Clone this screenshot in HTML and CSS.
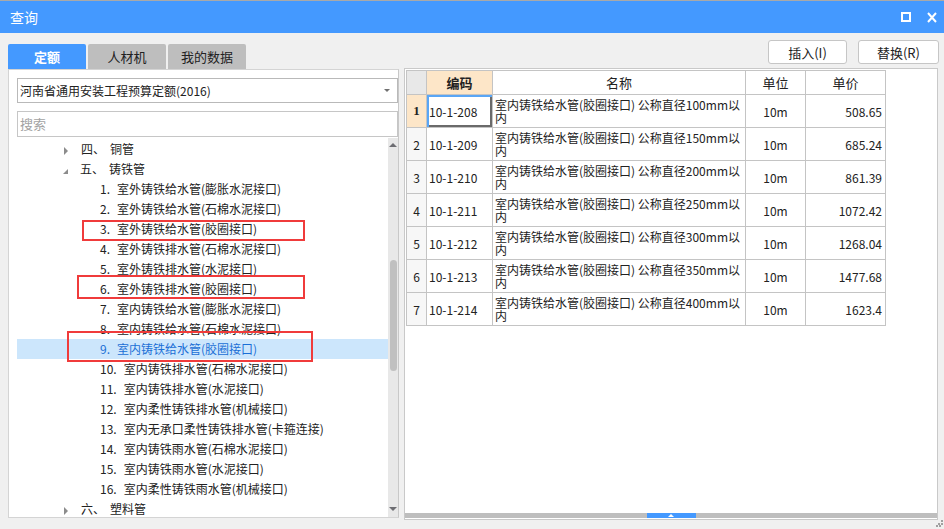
FILE: index.html
```html
<!DOCTYPE html>
<html lang="zh-CN">
<head>
<meta charset="utf-8">
<title>查询</title>
<link rel="stylesheet" href="styles.css">
</head>
<body>
<div class="window">
  <header class="titlebar">
    <span class="title">查询</span>
    <div class="win-btns">
      <svg class="ico" width="10" height="10" viewBox="0 0 10 10"><rect x="1" y="1" width="8" height="8" fill="none" stroke="#fff" stroke-width="2"/></svg>
      <svg class="ico" width="10" height="11" viewBox="0 0 10 11"><path d="M1 1 L9 10 M9 1 L1 10" stroke="#fff" stroke-width="2" fill="none"/></svg>
    </div>
  </header>

  <div class="content">
    <section class="left">
      <nav class="tabs">
        <div class="tab active">定额</div>
        <div class="tab">人材机</div>
        <div class="tab">我的数据</div>
      </nav>
      <div class="left-panel">
        <div class="select"><span class="select-text">河南省通用安装工程预算定额(2016)</span><i class="caret"></i></div>
        <div class="search">搜索</div>
        <div class="tree-wrap">
          <ul class="tree">
            <li class="cat"><i class="tri closed"></i><span class="ord">四、</span>铜管</li>
            <li class="cat"><i class="tri open"></i><span class="ord">五、</span>铸铁管</li>
            <li class="item"><span class="num">1.</span>室外铸铁给水管(膨胀水泥接口)</li>
            <li class="item"><span class="num">2.</span>室外铸铁给水管(石棉水泥接口)</li>
            <li class="item"><span class="num">3.</span>室外铸铁给水管(胶圈接口)<span class="mark m1"></span></li>
            <li class="item"><span class="num">4.</span>室外铸铁排水管(石棉水泥接口)</li>
            <li class="item"><span class="num">5.</span>室外铸铁排水管(水泥接口)</li>
            <li class="item"><span class="num">6.</span>室外铸铁排水管(胶圈接口)<span class="mark m2"></span></li>
            <li class="item"><span class="num">7.</span>室内铸铁给水管(膨胀水泥接口)</li>
            <li class="item"><span class="num">8.</span>室内铸铁给水管(石棉水泥接口)</li>
            <li class="item selected"><span class="num">9.</span>室内铸铁给水管(胶圈接口)<span class="mark m3"></span></li>
            <li class="item"><span class="num">10.</span>室内铸铁排水管(石棉水泥接口)</li>
            <li class="item"><span class="num">11.</span>室内铸铁排水管(水泥接口)</li>
            <li class="item"><span class="num">12.</span>室内柔性铸铁排水管(机械接口)</li>
            <li class="item"><span class="num">13.</span>室内无承口柔性铸铁排水管(卡箍连接)</li>
            <li class="item"><span class="num">14.</span>室内铸铁雨水管(石棉水泥接口)</li>
            <li class="item"><span class="num">15.</span>室内铸铁雨水管(水泥接口)</li>
            <li class="item"><span class="num">16.</span>室内柔性铸铁雨水管(机械接口)</li>
            <li class="cat"><i class="tri closed"></i><span class="ord">六、</span>塑料管</li>
          </ul>
          <div class="vscroll">
            <i class="arr up"></i>
            <div class="track"><div class="thumb"></div></div>
            <i class="arr down"></i>
          </div>
        </div>
      </div>
    </section>

    <section class="right">
      <div class="actions">
        <button class="btn btn-insert">插入(I)</button>
        <button class="btn btn-replace">替换(R)</button>
      </div>
      <div class="grid-panel">
        <div class="grid-scroll">
          <table class="grid">
            <colgroup>
              <col class="c-no"><col class="c-code"><col class="c-name"><col class="c-unit"><col class="c-price">
            </colgroup>
            <thead>
              <tr>
                <th class="corner"></th>
                <th class="hl">编码</th>
                <th>名称</th>
                <th>单位</th>
                <th>单价</th>
              </tr>
            </thead>
            <tbody>
              <tr><td class="no hl first">1</td><td class="code focus">10-1-208</td><td class="name">室内铸铁给水管(胶圈接口) 公称直径100mm以内</td><td class="unit">10m</td><td class="price">508.65</td></tr>
              <tr><td class="no">2</td><td class="code">10-1-209</td><td class="name">室内铸铁给水管(胶圈接口) 公称直径150mm以内</td><td class="unit">10m</td><td class="price">685.24</td></tr>
              <tr><td class="no">3</td><td class="code">10-1-210</td><td class="name">室内铸铁给水管(胶圈接口) 公称直径200mm以内</td><td class="unit">10m</td><td class="price">861.39</td></tr>
              <tr><td class="no">4</td><td class="code">10-1-211</td><td class="name">室内铸铁给水管(胶圈接口) 公称直径250mm以内</td><td class="unit">10m</td><td class="price">1072.42</td></tr>
              <tr><td class="no">5</td><td class="code">10-1-212</td><td class="name">室内铸铁给水管(胶圈接口) 公称直径300mm以内</td><td class="unit">10m</td><td class="price">1268.04</td></tr>
              <tr><td class="no">6</td><td class="code">10-1-213</td><td class="name">室内铸铁给水管(胶圈接口) 公称直径350mm以内</td><td class="unit">10m</td><td class="price">1477.68</td></tr>
              <tr><td class="no">7</td><td class="code">10-1-214</td><td class="name">室内铸铁给水管(胶圈接口) 公称直径400mm以内</td><td class="unit">10m</td><td class="price">1623.4</td></tr>
            </tbody>
          </table>
        </div>
        <div class="hbar"><span class="handle"><i class="handle-arrow"></i></span></div>
      </div>
    </section>
  </div>
</div>
<svg class="grip" width="7" height="7" viewBox="0 0 7 7">
  <rect x="5" y="0" width="2" height="2" fill="#a0a0a0"/>
  <rect x="2" y="3" width="2" height="2" fill="#a0a0a0"/>
  <rect x="5" y="3" width="2" height="2" fill="#a0a0a0"/>
  <rect x="0" y="5" width="2" height="2" fill="#a0a0a0"/>
  <rect x="3" y="5" width="2" height="2" fill="#a0a0a0"/>
</svg>
</body>
</html>
```

FILE: styles.css
```css
* { box-sizing: border-box; }

html, body {
  margin: 0;
  padding: 0;
}

body {
  width: 944px;
  height: 529px;
  overflow: hidden;
  background: #f0f0f0;
  font-family: "Noto Sans CJK SC", "Noto Sans", sans-serif;
  color: #222;
  position: relative;
}

/* ---------- title bar ---------- */
.titlebar {
  height: 33px;
  border-top: 1px solid #a9a9a9;
  background: #4499ff;
  display: flex;
  align-items: center;
  justify-content: space-between;
  padding: 0 7px 0 10px;
  color: #fff;
}

.title {
  font-size: 14px;
  line-height: 1;
}

.win-btns {
  display: flex;
  align-items: center;
  gap: 16px;
}

.ico { display: block; }

/* ---------- layout ---------- */
.content {
  display: flex;
  gap: 5px;
  padding: 0 5px 0 8px;
}

.left {
  width: 391px;
  padding-top: 11px;
  display: flex;
  flex-direction: column;
}

.right {
  width: 535px;
  padding-top: 7px;
  display: flex;
  flex-direction: column;
}

/* ---------- tabs ---------- */
.tabs {
  display: flex;
  gap: 2px;
  height: 25px;
}

.tab {
  width: 78px;
  height: 25px;
  background: #bebebe;
  border-radius: 2px 2px 0 0;
  font-size: 13px;
  line-height: 25px;
  text-align: center;
  color: #222;
}

.tab.active {
  background: #4499ff;
  color: #fff;
  font-weight: bold;
}

/* ---------- left panel ---------- */
.left-panel {
  height: 449px;
  border: 1px solid #d4d4d4;
  border-right-color: #c8c8c8;
  background: #fff;
  padding: 8px 0 0 8px;
  display: flex;
  flex-direction: column;
}

.select {
  height: 25px;
  border: 1px solid #b9b9b9;
  display: flex;
  align-items: center;
  justify-content: space-between;
  padding: 0 7px 0 2px;
  font-size: 12px;
}

.caret {
  width: 0;
  height: 0;
  border-left: 3px solid transparent;
  border-right: 3px solid transparent;
  border-top: 3px solid #707070;
}

.search {
  margin-top: 8px;
  height: 26px;
  border: 1px solid #c6c6c6;
  font-size: 13px;
  line-height: 24px;
  padding-left: 2px;
  color: #a3a3a3;
}

.tree-wrap {
  flex: 1;
  margin-top: 1px;
  display: flex;
  overflow: hidden;
  min-height: 0;
}

.tree {
  flex: 1;
  list-style: none;
  margin: 0;
  padding: 1px 0 0 0;
  font-size: 12px;
  color: #222;
  overflow: hidden;
}

.tree li {
  height: 20px;
  line-height: 20px;
  white-space: nowrap;
  position: relative;
}

.cat { padding-left: 46px; }

.tri {
  display: inline-block;
  margin-right: 12px;
}

.tri.closed {
  width: 0;
  height: 0;
  border-top: 4px solid transparent;
  border-bottom: 4px solid transparent;
  border-left: 4px solid #8c8c8c;
  margin-right: 13px;
  margin-left: 1px;
  vertical-align: -1px;
}

.tri.open {
  width: 0;
  height: 0;
  border-left: 5px solid transparent;
  border-bottom: 5px solid #8c8c8c;
  vertical-align: 0;
}

.ord { margin-right: 5px; }

.item { padding-left: 83px; }

.num { margin-right: 7px; }

.item.selected {
  background: #cce6fc;
  color: #1b6fd6;
}

.mark {
  position: absolute;
  border: 2px solid #f03b3b;
  pointer-events: none;
}

.m1 { left: 65px; top: 1px; width: 223px; height: 21px; }
.m2 { left: 60px; top: -4px; width: 228px; height: 24px; }
.m3 { left: 50px; top: -8px; width: 246px; height: 31px; }

/* vertical scrollbar */
.vscroll {
  width: 10px;
  background: #e8e8e8;
  display: flex;
  flex-direction: column;
  align-items: center;
}

.arr {
  width: 0;
  height: 0;
  border-left: 4px solid transparent;
  border-right: 4px solid transparent;
}

.arr.up {
  margin-top: 5px;
  border-bottom: 4px solid #6d6d72;
}

.arr.down {
  margin-bottom: 6px;
  border-top: 4px solid #6d6d72;
}

.track {
  flex: 1;
  width: 100%;
  padding-top: 113px;
  display: flex;
  justify-content: center;
}

.thumb {
  width: 7px;
  height: 111px;
  background: #c0c0c0;
  border-radius: 4px;
}

/* ---------- right side ---------- */
.actions {
  height: 24px;
  display: flex;
  justify-content: flex-end;
  gap: 11px;
}

.btn {
  height: 24px;
  background: #fff;
  border: 1px solid #c6c6c6;
  border-radius: 3px;
  font-family: "Noto Sans CJK SC", "Noto Sans", sans-serif;
  font-size: 13px;
  color: #222;
  padding: 0;
}

.btn-insert { width: 79px; }
.btn-replace { width: 81px; }

.grid-panel {
  margin-top: 4px;
  width: 534px;
  height: 452px;
  border: 1px solid #c9c9c9;
  background: #fff;
  display: flex;
  flex-direction: column;
}

.grid-scroll {
  flex: 1;
  padding: 1px 0 0 1px;
  overflow: hidden;
}

.grid {
  border-collapse: collapse;
  table-layout: fixed;
  width: 479px;
  font-size: 12px;
}

.c-no { width: 20px; }
.c-code { width: 66px; }
.c-name { width: 253px; }
.c-unit { width: 60px; }
.c-price { width: 80px; }

.grid th, .grid td {
  border: 1px solid #c4c4c4;
  padding: 0;
  vertical-align: middle;
}

.grid th {
  height: 24px;
  font-size: 13px;
  font-weight: normal;
  text-align: center;
  background: #fff;
  color: #222;
}

.grid th.corner { background: #e8e8e8; }

.grid th.hl {
  background: #fde6c8;
  font-weight: bold;
}

.grid td { height: 33px; }

.grid td.no {
  text-align: center;
  background: #f7f7f7;
}

.grid td.no.hl {
  background: #fde6c8;
  font-family: "Liberation Serif", serif;
  font-weight: bold;
  font-size: 13px;
}

.grid td.code { padding-left: 2px; }

.grid td.focus {
  box-shadow: inset 2px 2px 0 #5aa6f5, inset -2px -2px 0 #6a6a6a;
}

.grid td.name {
  padding: 0 3px 0 2px;
  line-height: 13px;
}

.grid td.unit { text-align: center; }

.grid td.price {
  text-align: right;
  padding-right: 3px;
}

/* horizontal splitter bar */
.hbar {
  height: 5px;
  background: #bebebe;
  display: flex;
  justify-content: center;
  margin-bottom: 1px;
}

.handle {
  width: 49px;
  height: 5px;
  background: #4499ff;
  display: flex;
  justify-content: center;
  align-items: center;
}

.handle-arrow {
  width: 0;
  height: 0;
  border-left: 3px solid transparent;
  border-right: 3px solid transparent;
  border-bottom: 3px solid #fff;
}

.grip {
  position: absolute;
  right: 1px;
  bottom: 2px;
}
```
